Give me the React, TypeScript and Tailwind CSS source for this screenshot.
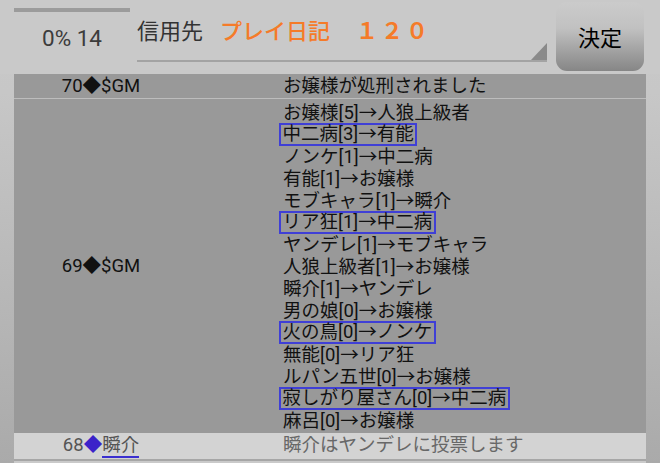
import React from "react";

const FONT = { fontFamily: 'Roboto, "Noto Sans CJK JP", sans-serif' };

const lines: { t: string; box?: boolean }[] = [
  { t: "お嬢様[5]→人狼上級者" },
  { t: "中二病[3]→有能", box: true },
  { t: "ノンケ[1]→中二病" },
  { t: "有能[1]→お嬢様" },
  { t: "モブキャラ[1]→瞬介" },
  { t: "リア狂[1]→中二病", box: true },
  { t: "ヤンデレ[1]→モブキャラ" },
  { t: "人狼上級者[1]→お嬢様" },
  { t: "瞬介[1]→ヤンデレ" },
  { t: "男の娘[0]→お嬢様" },
  { t: "火の鳥[0]→ノンケ", box: true },
  { t: "無能[0]→リア狂" },
  { t: "ルパン五世[0]→お嬢様" },
  { t: "寂しがり屋さん[0]→中二病", box: true },
  { t: "麻呂[0]→お嬢様" },
];

export default function App() {
  return (
    <div
      className="w-[660px] h-[463px] overflow-hidden bg-[linear-gradient(to_bottom,#c9c9c9_0%,#c7c7c7_20%,#aaaaaa_100%)]"
      style={FONT}
    >
      {/* header */}
      <div className="flex h-[74px] bg-[#c9c9c9]">
        <div className="w-[14px] shrink-0" />
        <div className="w-[116px] shrink-0 flex flex-col items-center pt-[8px]">
          <div className="h-[4px] w-full bg-[#9b9b9b]" />
          <div className="mt-[13px] text-[22.5px] leading-[26px] text-[#3c3c3c]">0% 14</div>
        </div>
        <div className="ml-[7px] w-[410px] shrink-0 h-[62px] relative border-b-2 border-[#a3a3a3] flex items-center pt-[4px]">
          <span className="text-[22px] leading-[26px] text-[#333333]">信用先</span>
          <span className="ml-[17px] text-[22px] leading-[26px] text-[#f57b29] font-medium">プレイ日記</span>
          <span className="ml-[26px] text-[22px] leading-[26px] text-[#f57b29] font-bold tracking-[3px]">１２０</span>
          <div className="absolute right-0 bottom-0 w-0 h-0 border-l-[16px] border-l-transparent border-b-[17px] border-b-[#8a8a8a]" />
        </div>
        <div className="ml-[9px] mt-[2px] w-[88px] h-[69px] rounded-[11px] bg-[linear-gradient(to_bottom,#cbcbcb_0%,#c1c1c1_38%,#868686_100%)] flex items-center justify-center">
          <span className="text-[22px] leading-[26px] text-black pt-[4px]">決定</span>
        </div>
      </div>

      {/* table */}
      <div className="mx-[14px] text-[18.5px] text-[#111111]">
        <div className="flex h-[24px] bg-[#999999] leading-[24px]">
          <div className="w-[174px] text-center">70◆$GM</div>
          <div className="pl-[95px]">お嬢様が処刑されました</div>
        </div>
        <div className="h-px bg-[#bdbdbd]" />
        <div className="flex bg-[#999999] pt-[3px] pb-[1px]">
          <div className="w-[174px] flex items-center justify-center">69◆$GM</div>
          <div className="pl-[95px]">
            {lines.map((l, i) => (
              <div key={i} className="h-[22px] leading-[22px] whitespace-nowrap">
                {l.box ? (
                  <span className="inline-block align-top -mt-px -ml-[4px] h-[23px] border-[2.5px] border-[#3f3fd6] px-[1.5px] leading-[18px]">
                    {l.t}
                  </span>
                ) : (
                  l.t
                )}
              </div>
            ))}
          </div>
        </div>
        <div className="flex h-[26px] bg-[#d3d3d3] leading-[25px]">
          <div className="w-[174px] text-center text-[#555555]">
            68<span className="text-[#3b22c9]">◆</span>
            <span className="border-b-2 border-[#3b2fcf]">瞬介</span>
          </div>
          <div className="pl-[95px] text-[#686868]">瞬介はヤンデレに投票します</div>
        </div>
        <div className="h-[2px] bg-[#a6a6a6]" />
        <div className="h-[10px] bg-[#cacaca]" />
      </div>
    </div>
  );
}
